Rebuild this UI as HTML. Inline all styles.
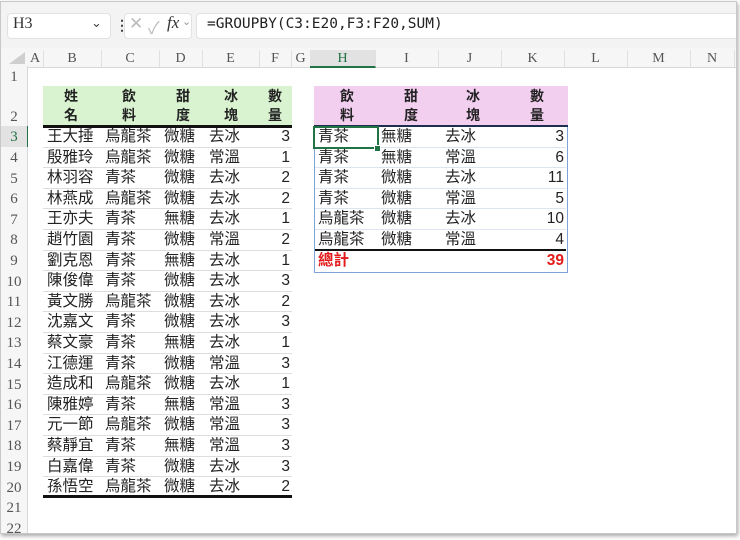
<!DOCTYPE html>
<html><head><meta charset="utf-8"><style>
body{margin:0;width:740px;height:540px;background:#fff;overflow:hidden;font-family:"Liberation Sans","Noto Sans CJK TC",sans-serif;}
.a{position:absolute}
.frame{position:absolute;left:0px;top:1px;width:735px;height:531px;border:1px solid #c8c8c8;box-shadow:1px 2px 4px rgba(0,0,0,.35);background:#fff;overflow:hidden}
.ch{position:absolute;top:48px;height:17px;font-family:"Liberation Serif",serif;font-size:14px;color:#555;text-align:center;line-height:17px;border-right:1px solid #e0e0e0}
.rh{position:absolute;left:0;width:26px;font-family:"Liberation Serif",serif;font-size:15px;color:#555;text-align:center;background:#f6f6f6}
.t{position:absolute;font-size:15.5px;color:#222;line-height:20px;white-space:nowrap}
.hd{position:absolute;font-size:14px;font-weight:bold;color:#222;line-height:19px;text-align:center}
</style></head><body>
<div class="frame">
<div class="a" style="left:0;top:0;width:735px;height:46px;background:#f3f3f3"></div>
<div class="a" style="left:6px;top:11px;width:102px;height:24px;background:#fff;border-radius:4px;border:1px solid #e2e2e2"></div>
<div class="a" style="left:12px;top:13px;font-family:'Liberation Serif',serif;font-size:16px;color:#333">H3</div>
<div class="a" style="left:90px;top:13px;font-size:13px;color:#444">&#8964;</div>
<div class="a" style="left:114px;top:15px;font-size:14px;color:#444;font-weight:bold">&#8942;</div>
<div class="a" style="left:123px;top:11px;width:66px;height:24px;background:#fff;border-radius:4px;border:1px solid #e2e2e2"></div>
<div class="a" style="left:128px;top:12px;font-size:17px;color:#bbb">&#10005;</div>
<div class="a" style="left:147px;top:12px;font-size:17px;color:#bbb">&#10003;</div>
<div class="a" style="left:166px;top:11px;font-family:'Liberation Serif',serif;font-style:italic;font-size:17px;color:#333">fx</div>
<div class="a" style="left:181px;top:13px;font-size:11px;color:#999">&#8964;</div>
<div class="a" style="left:195px;top:11px;width:545px;height:24px;background:#fff;border-radius:4px;border:1px solid #e2e2e2"></div>
<div class="a" style="left:206px;top:14px;font-family:'DejaVu Sans Mono','Liberation Mono',monospace;font-size:14.5px;color:#222">=GROUPBY(C3:E20,F3:F20,SUM)</div>
<div class="a" style="left:0;top:46px;width:735px;height:19px;background:#f6f6f6;border-bottom:1px solid #d8d8d8"></div>
<div class="a" style="left:8px;top:50px;width:0;height:0;border-left:16px solid transparent;border-bottom:12px solid #cfcfcf"></div>
<div class="ch" style="left:26px;width:16px">A</div>
<div class="ch" style="left:42px;width:58px">B</div>
<div class="ch" style="left:100px;width:58px">C</div>
<div class="ch" style="left:158px;width:43px">D</div>
<div class="ch" style="left:201px;width:57px">E</div>
<div class="ch" style="left:258px;width:32px">F</div>
<div class="ch" style="left:290px;width:19px">G</div>
<div class="ch" style="left:309px;width:65px;background:#e2e2e2;color:#217346;border-bottom:2px solid #217346;height:16px">H</div>
<div class="ch" style="left:374px;width:63px">I</div>
<div class="ch" style="left:437px;width:63px">J</div>
<div class="ch" style="left:500px;width:63px">K</div>
<div class="ch" style="left:563px;width:63px">L</div>
<div class="ch" style="left:626px;width:63px">M</div>
<div class="ch" style="left:689px;width:44px">N</div>
<div class="a" style="left:0;top:64px;width:26px;height:470px;background:#f6f6f6;border-right:1px solid #d8d8d8"></div>
<div class="rh" style="top:64px;height:20px;line-height:22px">1</div>
<div class="rh" style="top:84px;height:40px;line-height:62px">2</div>
<div class="a" style="left:25px;top:124px;width:2px;height:21px;background:#217346"></div>
<div class="rh" style="top:124px;line-height:22px;background:#e2e2e2;color:#217346;height:21px">3</div>
<div class="rh" style="top:145px;line-height:22px">4</div>
<div class="rh" style="top:165.6px;line-height:22px">5</div>
<div class="rh" style="top:186.2px;line-height:22px">6</div>
<div class="rh" style="top:206.8px;line-height:22px">7</div>
<div class="rh" style="top:227.4px;line-height:22px">8</div>
<div class="rh" style="top:248px;line-height:22px">9</div>
<div class="rh" style="top:268.6px;line-height:22px">10</div>
<div class="rh" style="top:289.2px;line-height:22px">11</div>
<div class="rh" style="top:309.8px;line-height:22px">12</div>
<div class="rh" style="top:330.4px;line-height:22px">13</div>
<div class="rh" style="top:351px;line-height:22px">14</div>
<div class="rh" style="top:371.6px;line-height:22px">15</div>
<div class="rh" style="top:392.2px;line-height:22px">16</div>
<div class="rh" style="top:412.8px;line-height:22px">17</div>
<div class="rh" style="top:433.4px;line-height:22px">18</div>
<div class="rh" style="top:454px;line-height:22px">19</div>
<div class="rh" style="top:474.6px;line-height:22px">20</div>
<div class="rh" style="top:495.2px;line-height:22px">21</div>
<div class="rh" style="top:515.8px;line-height:22px">22</div>

<div class="a" style="left:42px;top:84px;width:249px;height:40px;background:#d9f2d0"></div>
<div class="hd" style="left:50px;top:85px;width:40px">姓<br>名</div>
<div class="hd" style="left:108px;top:85px;width:40px">飲<br>料</div>
<div class="hd" style="left:162px;top:85px;width:40px">甜<br>度</div>
<div class="hd" style="left:210px;top:85px;width:40px">冰<br>塊</div>
<div class="hd" style="left:254px;top:85px;width:40px">數<br>量</div>
<div class="a" style="left:42px;top:123px;width:249px;height:3px;background:#111"></div>

<div class="a" style="left:313px;top:84px;width:254px;height:40px;background:#f2ceef"></div>
<div class="hd" style="left:326px;top:85px;width:40px">飲<br>料</div>
<div class="hd" style="left:390px;top:85px;width:40px">甜<br>度</div>
<div class="hd" style="left:452px;top:85px;width:40px">冰<br>塊</div>
<div class="hd" style="left:516px;top:85px;width:40px">數<br>量</div>
<div class="a" style="left:313px;top:123px;width:254px;height:2px;background:#1f2d50"></div>
<div class="a" style="left:313px;top:125px;width:252px;height:145px;border:1px solid #7ea3d8;border-top:none"></div>

<div style="position:absolute;left:42px;top:125px;width:249px">
<div style="position:relative;height:20.6px;border-bottom:1px solid #ddd;box-sizing:border-box"><span class="t" style="left:4px">王大捶</span><span class="t" style="left:62px">烏龍茶</span><span class="t" style="left:121px">微糖</span><span class="t" style="left:166px">去冰</span><span class="t" style="right:2px">3</span></div>
<div style="position:relative;height:20.6px;border-bottom:1px solid #ddd;box-sizing:border-box"><span class="t" style="left:4px">殷雅玲</span><span class="t" style="left:62px">烏龍茶</span><span class="t" style="left:121px">微糖</span><span class="t" style="left:166px">常溫</span><span class="t" style="right:2px">1</span></div>
<div style="position:relative;height:20.6px;border-bottom:1px solid #ddd;box-sizing:border-box"><span class="t" style="left:4px">林羽容</span><span class="t" style="left:62px">青茶</span><span class="t" style="left:121px">微糖</span><span class="t" style="left:166px">去冰</span><span class="t" style="right:2px">2</span></div>
<div style="position:relative;height:20.6px;border-bottom:1px solid #ddd;box-sizing:border-box"><span class="t" style="left:4px">林燕成</span><span class="t" style="left:62px">烏龍茶</span><span class="t" style="left:121px">微糖</span><span class="t" style="left:166px">去冰</span><span class="t" style="right:2px">2</span></div>
<div style="position:relative;height:20.6px;border-bottom:1px solid #ddd;box-sizing:border-box"><span class="t" style="left:4px">王亦夫</span><span class="t" style="left:62px">青茶</span><span class="t" style="left:121px">無糖</span><span class="t" style="left:166px">去冰</span><span class="t" style="right:2px">1</span></div>
<div style="position:relative;height:20.6px;border-bottom:1px solid #ddd;box-sizing:border-box"><span class="t" style="left:4px">趙竹園</span><span class="t" style="left:62px">青茶</span><span class="t" style="left:121px">微糖</span><span class="t" style="left:166px">常溫</span><span class="t" style="right:2px">2</span></div>
<div style="position:relative;height:20.6px;border-bottom:1px solid #ddd;box-sizing:border-box"><span class="t" style="left:4px">劉克恩</span><span class="t" style="left:62px">青茶</span><span class="t" style="left:121px">無糖</span><span class="t" style="left:166px">去冰</span><span class="t" style="right:2px">1</span></div>
<div style="position:relative;height:20.6px;border-bottom:1px solid #ddd;box-sizing:border-box"><span class="t" style="left:4px">陳俊偉</span><span class="t" style="left:62px">青茶</span><span class="t" style="left:121px">微糖</span><span class="t" style="left:166px">去冰</span><span class="t" style="right:2px">3</span></div>
<div style="position:relative;height:20.6px;border-bottom:1px solid #ddd;box-sizing:border-box"><span class="t" style="left:4px">黃文勝</span><span class="t" style="left:62px">烏龍茶</span><span class="t" style="left:121px">微糖</span><span class="t" style="left:166px">去冰</span><span class="t" style="right:2px">2</span></div>
<div style="position:relative;height:20.6px;border-bottom:1px solid #ddd;box-sizing:border-box"><span class="t" style="left:4px">沈嘉文</span><span class="t" style="left:62px">青茶</span><span class="t" style="left:121px">微糖</span><span class="t" style="left:166px">去冰</span><span class="t" style="right:2px">3</span></div>
<div style="position:relative;height:20.6px;border-bottom:1px solid #ddd;box-sizing:border-box"><span class="t" style="left:4px">蔡文豪</span><span class="t" style="left:62px">青茶</span><span class="t" style="left:121px">無糖</span><span class="t" style="left:166px">去冰</span><span class="t" style="right:2px">1</span></div>
<div style="position:relative;height:20.6px;border-bottom:1px solid #ddd;box-sizing:border-box"><span class="t" style="left:4px">江德運</span><span class="t" style="left:62px">青茶</span><span class="t" style="left:121px">微糖</span><span class="t" style="left:166px">常溫</span><span class="t" style="right:2px">3</span></div>
<div style="position:relative;height:20.6px;border-bottom:1px solid #ddd;box-sizing:border-box"><span class="t" style="left:4px">造成和</span><span class="t" style="left:62px">烏龍茶</span><span class="t" style="left:121px">微糖</span><span class="t" style="left:166px">去冰</span><span class="t" style="right:2px">1</span></div>
<div style="position:relative;height:20.6px;border-bottom:1px solid #ddd;box-sizing:border-box"><span class="t" style="left:4px">陳雅婷</span><span class="t" style="left:62px">青茶</span><span class="t" style="left:121px">無糖</span><span class="t" style="left:166px">常溫</span><span class="t" style="right:2px">3</span></div>
<div style="position:relative;height:20.6px;border-bottom:1px solid #ddd;box-sizing:border-box"><span class="t" style="left:4px">元一節</span><span class="t" style="left:62px">烏龍茶</span><span class="t" style="left:121px">微糖</span><span class="t" style="left:166px">常溫</span><span class="t" style="right:2px">3</span></div>
<div style="position:relative;height:20.6px;border-bottom:1px solid #ddd;box-sizing:border-box"><span class="t" style="left:4px">蔡靜宜</span><span class="t" style="left:62px">青茶</span><span class="t" style="left:121px">無糖</span><span class="t" style="left:166px">常溫</span><span class="t" style="right:2px">3</span></div>
<div style="position:relative;height:20.6px;border-bottom:1px solid #ddd;box-sizing:border-box"><span class="t" style="left:4px">白嘉偉</span><span class="t" style="left:62px">青茶</span><span class="t" style="left:121px">微糖</span><span class="t" style="left:166px">去冰</span><span class="t" style="right:2px">3</span></div>
<div style="position:relative;height:20.6px;border-bottom:3px solid #111;box-sizing:border-box"><span class="t" style="left:4px">孫悟空</span><span class="t" style="left:62px">烏龍茶</span><span class="t" style="left:121px">微糖</span><span class="t" style="left:166px">去冰</span><span class="t" style="right:2px">2</span></div>
</div>

<div style="position:absolute;left:314px;top:125px;width:251px">
<div style="position:relative;height:20.6px;border-bottom:1px solid #dde4f0;box-sizing:border-box"><span class="t" style="left:3px">青茶</span><span class="t" style="left:66px">無糖</span><span class="t" style="left:130px">去冰</span><span class="t" style="right:2px">3</span></div>
<div style="position:relative;height:20.6px;border-bottom:1px solid #dde4f0;box-sizing:border-box"><span class="t" style="left:3px">青茶</span><span class="t" style="left:66px">無糖</span><span class="t" style="left:130px">常溫</span><span class="t" style="right:2px">6</span></div>
<div style="position:relative;height:20.6px;border-bottom:1px solid #dde4f0;box-sizing:border-box"><span class="t" style="left:3px">青茶</span><span class="t" style="left:66px">微糖</span><span class="t" style="left:130px">去冰</span><span class="t" style="right:2px">11</span></div>
<div style="position:relative;height:20.6px;border-bottom:1px solid #dde4f0;box-sizing:border-box"><span class="t" style="left:3px">青茶</span><span class="t" style="left:66px">微糖</span><span class="t" style="left:130px">常溫</span><span class="t" style="right:2px">5</span></div>
<div style="position:relative;height:20.6px;border-bottom:1px solid #dde4f0;box-sizing:border-box"><span class="t" style="left:3px">烏龍茶</span><span class="t" style="left:66px">微糖</span><span class="t" style="left:130px">去冰</span><span class="t" style="right:2px">10</span></div>
<div style="position:relative;height:20.6px;border-bottom:2px solid #111;box-sizing:border-box"><span class="t" style="left:3px">烏龍茶</span><span class="t" style="left:66px">微糖</span><span class="t" style="left:130px">常溫</span><span class="t" style="right:2px">4</span></div>
<div style="position:relative;height:20.6px;box-sizing:border-box"><span class="t" style="left:3px;color:#e31b1b;font-weight:bold">總計</span><span class="t" style="right:2px;color:#e31b1b;font-weight:bold">39</span></div>
</div>
<div class="a" style="left:312px;top:124px;width:62px;height:19px;border:2px solid #217346"></div>
<div class="a" style="left:373px;top:143px;width:5px;height:5px;background:#217346;border:1px solid #fff"></div>
</div>
</body></html>
